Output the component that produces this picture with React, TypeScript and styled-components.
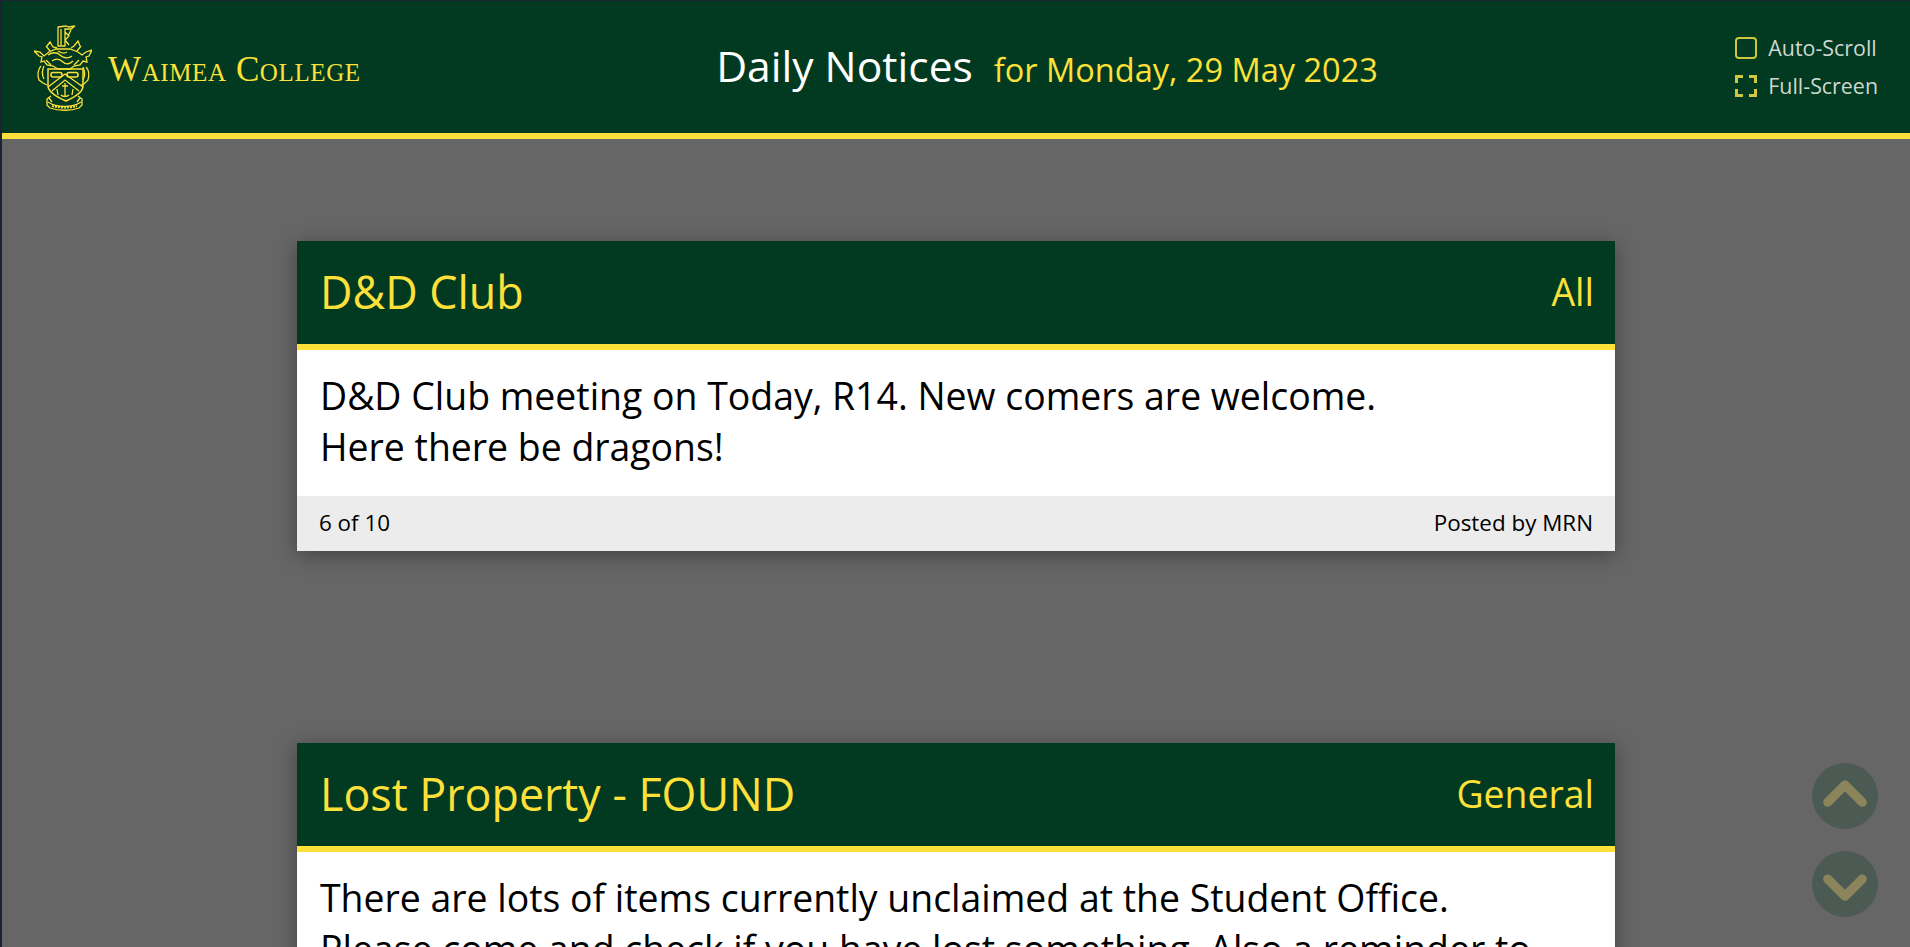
import styled, { createGlobalStyle } from 'styled-components';

const GREEN = '#013a20';
const YELLOW = '#fde03a';
const SANS = '"Open Sans", "Noto Sans", sans-serif';

const notices = [
  {
    title: 'D&D Club',
    group: 'All',
    lines: ['D&D Club meeting on Today, R14. New comers are welcome.', 'Here there be dragons!'],
    count: '6 of 10',
    author: 'Posted by MRN',
  },
  {
    title: 'Lost Property - FOUND',
    group: 'General',
    lines: [
      'There are lots of items currently unclaimed at the Student Office.',
      'Please come and check if you have lost something. Also a reminder to',
      'name all of your belongings.',
    ],
    count: '7 of 10',
    author: 'Posted by SJT',
  },
];

const Crest = () => (
  <CrestImage viewBox="0 0 58 87" fill="none" stroke={YELLOW} strokeWidth="1.3">
    {/* helmet and banner */}
    <path d="M24 3l8-1 3 1 6-1-4 3h-6v17h-7zM27 5v16M31 8l4 4-4 4 4 5M37 6l-3 6" />
    {/* side ornaments */}
    <path d="M13 22l3-4 3 5 4 1M46 22l-2-5-4 5-3 2M12 22l4 5M47 22l-4 5" />
    {/* mantling */}
    <path d="M0 27l6 1 4 4 5-4 7-3h14l8 3 4 3 4-3 6-2-3 6-3 1 1 5-4-1-3 4-6 1-4 3H24l-5-3-6-1-3-4-3 1 1-5-3-1z" />
    <path d="M14 31c4-3 9-3 12 0s8 4 12 1M18 37c4-3 8-2 11 1s7 2 10-1M24 27c3 2 6 3 9 1M12 36l5 5M45 36l-5 5" />
    {/* side scrolls */}
    <path d="M7 42c-3 3-4 9-2 14l4 3 4 2M10 42c-2 4-2 9 0 13M52 43c3 3 3 9 2 13l-4 4-3 1M49 43c2 4 2 9 0 13" />
    {/* shield */}
    <path d="M14 45h35v17c0 6-8 11-17 15-9-4-18-9-18-15z" strokeWidth="1.5" />
    <path d="M14 63l17-13 18 13M18 67l13-11 14 11" />
    <rect x="17" y="48.5" width="11" height="4.5" rx="2" strokeWidth="1.6" />
    <rect x="33" y="48.5" width="11" height="4.5" rx="2" strokeWidth="1.6" />
    <path d="M31 59v14M28 62h6M27 71c2 2 6 2 8 0M23 65l1 6M39 65l-1 6" />
    {/* motto scroll */}
    <path d="M17 72l-4 3v6l3 3c9 3 21 3 29 0l3-3v-6l-4-3M14 78c9 6 24 6 33 0M15 74l3 4M46 74l-3 4" />
    <path d="M18 82c8 2 17 2 25 0" strokeWidth="2" strokeDasharray="2 1" />
  </CrestImage>
);

const App = () => (
  <Page>
    <GlobalStyle />
    <Header>
      <Brand>
        <Crest />
        <College>Waimea College</College>
      </Brand>
      <Heading>
        <Title>Daily Notices</Title>
        <NoticeDate>for Monday, 29 May 2023</NoticeDate>
      </Heading>
      <Options>
        <Option>
          <svg width="22" height="22" viewBox="0 0 22 22" fill="none">
            <rect x="1" y="1" width="20" height="20" rx="3" stroke="#cfc83f" strokeWidth="2" />
          </svg>
          Auto-Scroll
        </Option>
        <Option>
          <svg width="22" height="22" viewBox="0 0 22 22" fill="none">
            <path d="M1.5 8V1.5H8M14 1.5h6.5V8M20.5 14v6.5H14M8 20.5H1.5V14" stroke="#cfc83f" strokeWidth="3" />
          </svg>
          Full-Screen
        </Option>
      </Options>
    </Header>
    <List>
      {notices.map((notice) => (
        <Card key={notice.title}>
          <CardHead>
            <CardTitle>{notice.title}</CardTitle>
            <CardGroup>{notice.group}</CardGroup>
          </CardHead>
          <CardBody>
            {notice.lines.map((line) => (
              <div key={line}>{line}</div>
            ))}
          </CardBody>
          <CardFoot>
            <span>{notice.count}</span>
            <span>{notice.author}</span>
          </CardFoot>
        </Card>
      ))}
    </List>
    <Arrows>
      <Arrow>
        <svg width="66" height="66" viewBox="0 0 66 66" fill="none">
          <path d="M15.7 39.3L33 22l17.3 17.3" stroke={YELLOW} strokeWidth="9" strokeLinecap="round" strokeLinejoin="round" />
        </svg>
      </Arrow>
      <Arrow>
        <svg width="66" height="66" viewBox="0 0 66 66" fill="none">
          <path d="M15.7 28L33 45.3 50.3 28" stroke={YELLOW} strokeWidth="9" strokeLinecap="round" strokeLinejoin="round" />
        </svg>
      </Arrow>
    </Arrows>
  </Page>
);

export default App;

const GlobalStyle = createGlobalStyle`
  html, body {
    margin: 0;
    height: 100%;
    overflow: hidden;
  }
  body {
    font-family: ${SANS};
  }
`;

const Page = styled.div`
  position: relative;
  height: 947px;
  overflow: hidden;
  box-sizing: border-box;
  background: #666;
  border-left: 2px solid #1a2233;
  border-top: 1px solid #1a2233;
`;

const Header = styled.header`
  box-sizing: border-box;
  height: 138px;
  background: ${GREEN};
  border-bottom: 6px solid ${YELLOW};
  display: flex;
  align-items: center;
  justify-content: space-between;
  padding: 0 32px;
`;

const Brand = styled.div`
  display: flex;
  align-items: center;
  gap: 16px;
`;

const CrestImage = styled.svg`
  width: 58px;
  height: 87px;
`;

const College = styled.span`
  font-family: "Liberation Serif", serif;
  font-variant: small-caps;
  font-size: 35px;
  color: ${YELLOW};
  letter-spacing: 0.6px;
  margin-top: 5px;
`;

const Heading = styled.div`
  display: flex;
  align-items: baseline;
  gap: 21px;
  margin: 0 0 4px -2px;
`;

const Title = styled.h1`
  margin: 0;
  font-size: 42.6px;
  font-weight: 400;
  color: #fff;
`;

const NoticeDate = styled.span`
  font-size: 32.5px;
  color: ${YELLOW};
`;

const Options = styled.div`
  display: flex;
  flex-direction: column;
  gap: 12px;
`;

const Option = styled.div`
  display: flex;
  align-items: center;
  gap: 11px;
  font-size: 21.4px;
  line-height: 26px;
  color: #cdd8d0;
`;

const List = styled.main`
  display: flex;
  flex-direction: column;
  gap: 192px;
  padding: 102px 295px 0;
`;

const Card = styled.article`
  width: 1318px;
  flex-shrink: 0;
  box-shadow: 0 4px 20px rgba(0, 0, 0, 0.35);
`;

const CardHead = styled.div`
  height: 101px;
  background: ${GREEN};
  border-bottom: 6px solid ${YELLOW};
  display: flex;
  align-items: center;
  justify-content: space-between;
  padding: 0 21px 2px 23px;
  color: ${YELLOW};
`;

const CardTitle = styled.h2`
  margin: 0;
  font-size: 44.8px;
  font-weight: 400;
`;

const CardGroup = styled.span`
  font-size: 37.4px;
`;

const CardBody = styled.div`
  background: #fff;
  color: #000;
  font-size: 37.4px;
  line-height: 51px;
  padding: 20px 23px 24px;
`;

const CardFoot = styled.div`
  height: 55px;
  box-sizing: border-box;
  padding: 0 22px 2px;
  background: #ececec;
  color: #000;
  font-size: 22.4px;
  display: flex;
  align-items: center;
  justify-content: space-between;
`;

const Arrows = styled.div`
  position: absolute;
  right: 32px;
  bottom: 30px;
  display: flex;
  flex-direction: column;
  gap: 22px;
`;

const Arrow = styled.button`
  width: 66px;
  height: 66px;
  border: 0;
  padding: 0;
  border-radius: 50%;
  background: ${GREEN};
  opacity: 0.25;
  display: block;
  svg {
    display: block;
  }
`;
